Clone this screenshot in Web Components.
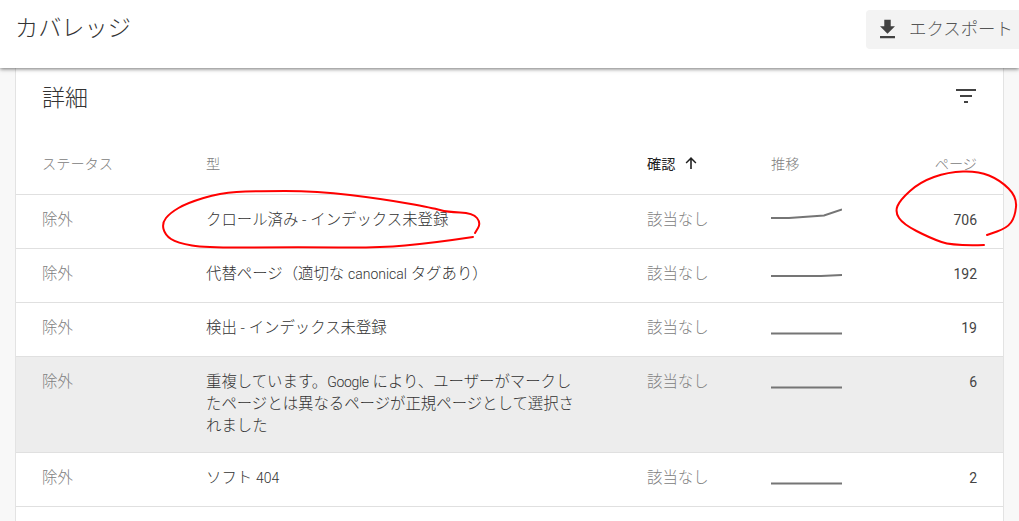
<!DOCTYPE html>
<html lang="ja">
<head>
<meta charset="utf-8">
<title>カバレッジ</title>
<style>
  html, body { margin: 0; height: 521px; overflow: hidden; background: #f8f8f8; }
  body { font-family: Roboto, "Noto Sans CJK JP", sans-serif; color: #3c4043; position: relative; }
  /* latin runs stay at the smaller size next to the japanese text */
  .latin { font-size: 14px; }
  .tight { letter-spacing: -0.3px; }
</style>
</head>
<body>
<app-header>カバレッジ</app-header>
<details-card heading="詳細">
  <status-row status="除外" check="該当なし" pages="706" trend="0,20 18,20 53,17.5 71,11.5">クロール済み - インデックス未登録</status-row>
  <status-row status="除外" check="該当なし" pages="192" trend="0,24 50,24 71,23">代替ページ（適切な <span class="latin">canonical</span> タグあり）</status-row>
  <status-row status="除外" check="該当なし" pages="19" trend="0,27.5 71,27.5">検出 - インデックス未登録</status-row>
  <status-row status="除外" check="該当なし" pages="6" trend="0,27.5 71,27.5" active>重複しています。<span class="latin tight">Google</span> により、ユーザーがマークし<br>たページとは異なるページが正規ページとして選択さ<br>れました</status-row>
  <status-row status="除外" check="該当なし" pages="2" trend="0,27.5 71,27.5">ソフト <span class="latin">404</span></status-row>
</details-card>
<hand-mark points="473,237 433,243 377,248 300,247 207,248 177,243 165,235 162,223 170,213 187,203 220,193 253,191 317,191 383,199 433,208 447,212 473,213 481,223 475,233"></hand-mark>
<hand-mark points="984,245 953,246 930,238 903,224 895,212 900,200 920,182 948,172 978,171 1000,180 1017,197 1015,217 1007,228 987,235"></hand-mark>

<script>
// Page title bar with the export button
class AppHeader extends HTMLElement {
  constructor() {
    super();
    this.attachShadow({ mode: "open" });
    this.shadowRoot.innerHTML = `
      <style>
        :host {
          display: flex;
          justify-content: space-between;
          height: 68px;
          background: #fff;
          box-shadow: 0 1px 4px rgba(0, 0, 0, 0.55);
          position: relative;
          z-index: 2;
        }
        h1 {
          margin: 12px 0 0 15px;
          font-size: 23.2px;
          font-weight: 300;
          line-height: 32px;
          color: #333;
        }
        button {
          display: flex;
          align-items: center;
          gap: 10px;
          width: 153px;
          height: 39px;
          margin-top: 10px;
          padding: 0 0 5px 10px;
          border: 0;
          border-radius: 4px 0 0 4px;
          background: #f3f3f3;
          color: #555;
          font: 300 17.4px Roboto, "Noto Sans CJK JP", sans-serif;
          white-space: nowrap;
        }
        svg { width: 23px; height: 23px; fill: #424242; flex: none; margin-top: 5px; }
      </style>
      <h1><slot></slot></h1>
      <button>
        <svg viewBox="0 0 20 20"><path d="M16.5 7.2h-3.7V1.6H7.2v5.6H3.5l6.5 6.5zM3.5 15.6v2h13v-2z"/></svg>
        エクスポート
      </button>
    `;
  }
}

// White card holding the heading, the column titles and the rows
class DetailsCard extends HTMLElement {
  constructor() {
    super();
    this.attachShadow({ mode: "open" });
  }

  connectedCallback() {
    this.shadowRoot.innerHTML = `
      <style>
        :host {
          display: block;
          margin: 0 15px;
          height: 453px;
          background: #fff;
          border: solid #e3e3e3;
          border-width: 0 1px;
          overflow: hidden;
        }
        .top {
          display: flex;
          justify-content: space-between;
          height: 67px;
          padding: 0 26px 0 26px;
        }
        h2 {
          margin: 15px 0 0;
          font-size: 23px;
          font-weight: 300;
          line-height: 32px;
          color: #333;
        }
        .top svg { width: 24px; height: 24px; margin: 16px -1px 0 0; fill: #424242; }
        .heads {
          display: grid;
          grid-template-columns: 164px 441px 124px 1fr;
          height: 59px;
          padding: 0 26px;
          border-bottom: 1px solid #e0e0e0;
          font-size: 14.2px;
          font-weight: 300;
          line-height: 22px;
          color: #808080;
        }
        .heads > div { padding-top: 18px; }
        .sorted { color: #212121; font-weight: 400; display: flex; gap: 9px; }
        .sorted svg { width: 14px; height: 14px; margin-top: 3px; fill: #212121; }
        .split { display: flex; justify-content: space-between; }
      </style>
      <div class="top">
        <h2>${this.getAttribute("heading")}</h2>
        <svg viewBox="0 0 24 24"><path d="M2 5h20v2H2zM6 11h12v2H6zM10 17h4v2h-4z"/></svg>
      </div>
      <div class="heads">
        <div>ステータス</div>
        <div>型</div>
        <div class="sorted">確認
          <svg viewBox="0 0 14 14"><path d="M7 1 1.6 6.4l1 1L6.2 3.9V13h1.6V3.9l3.6 3.5 1-1z"/></svg>
        </div>
        <div class="split"><span>推移</span><span>ページ</span></div>
      </div>
      <slot></slot>
    `;
  }
}

// One table row, the long type text comes in through the slot
class StatusRow extends HTMLElement {
  constructor() {
    super();
    this.attachShadow({ mode: "open" });
  }

  connectedCallback() {
    const points = this.getAttribute("trend");
    this.shadowRoot.innerHTML = `
      <style>
        :host {
          display: grid;
          grid-template-columns: 164px 441px 124px 71px 1fr;
          box-sizing: border-box;
          min-height: 54px;
          padding: 14px 26px 15px;
          border-bottom: 1px solid #e0e0e0;
          font-size: 15.4px;
          font-weight: 300;
          line-height: 22px;
          color: #808080;
        }
        :host([active]) { background: #ededed; }
        .type { color: #333; white-space: nowrap; }
        .pages { color: #444; text-align: right; font-size: 14px; font-weight: 400; }
        svg { display: block; width: 71px; height: 32px; margin-top: -11px; }
        polyline { fill: none; stroke: #757575; stroke-width: 2; }
      </style>
      <div>${this.getAttribute("status")}</div>
      <div class="type"><slot></slot></div>
      <div>${this.getAttribute("check")}</div>
      <svg viewBox="0 0 71 32"><polyline points="${points}"/></svg>
      <div class="pages">${this.getAttribute("pages")}</div>
    `;
  }
}

// Red freehand circles drawn over the screenshot
class HandMark extends HTMLElement {
  constructor() {
    super();
    this.attachShadow({ mode: "open" });
  }

  connectedCallback() {
    const pts = this.getAttribute("points").split(" ").map((p) => p.split(",").map(Number));
    let d = `M${pts[0][0]} ${pts[0][1]}`;
    for (let i = 1; i < pts.length - 1; i++) {
      const mx = (pts[i][0] + pts[i + 1][0]) / 2;
      const my = (pts[i][1] + pts[i + 1][1]) / 2;
      d += ` Q${pts[i][0]} ${pts[i][1]} ${mx} ${my}`;
    }
    const last = pts[pts.length - 1];
    d += ` L${last[0]} ${last[1]}`;
    this.shadowRoot.innerHTML = `
      <style>
        :host { position: absolute; inset: 0; z-index: 3; pointer-events: none; }
        svg { display: block; width: 1019px; height: 521px; }
        path { fill: none; stroke: #f00; stroke-width: 2; stroke-linecap: round; stroke-linejoin: round; }
      </style>
      <svg viewBox="0 0 1019 521"><path d="${d}"/></svg>
    `;
  }
}

customElements.define("app-header", AppHeader);
customElements.define("details-card", DetailsCard);
customElements.define("status-row", StatusRow);
customElements.define("hand-mark", HandMark);
</script>
</body>
</html>
